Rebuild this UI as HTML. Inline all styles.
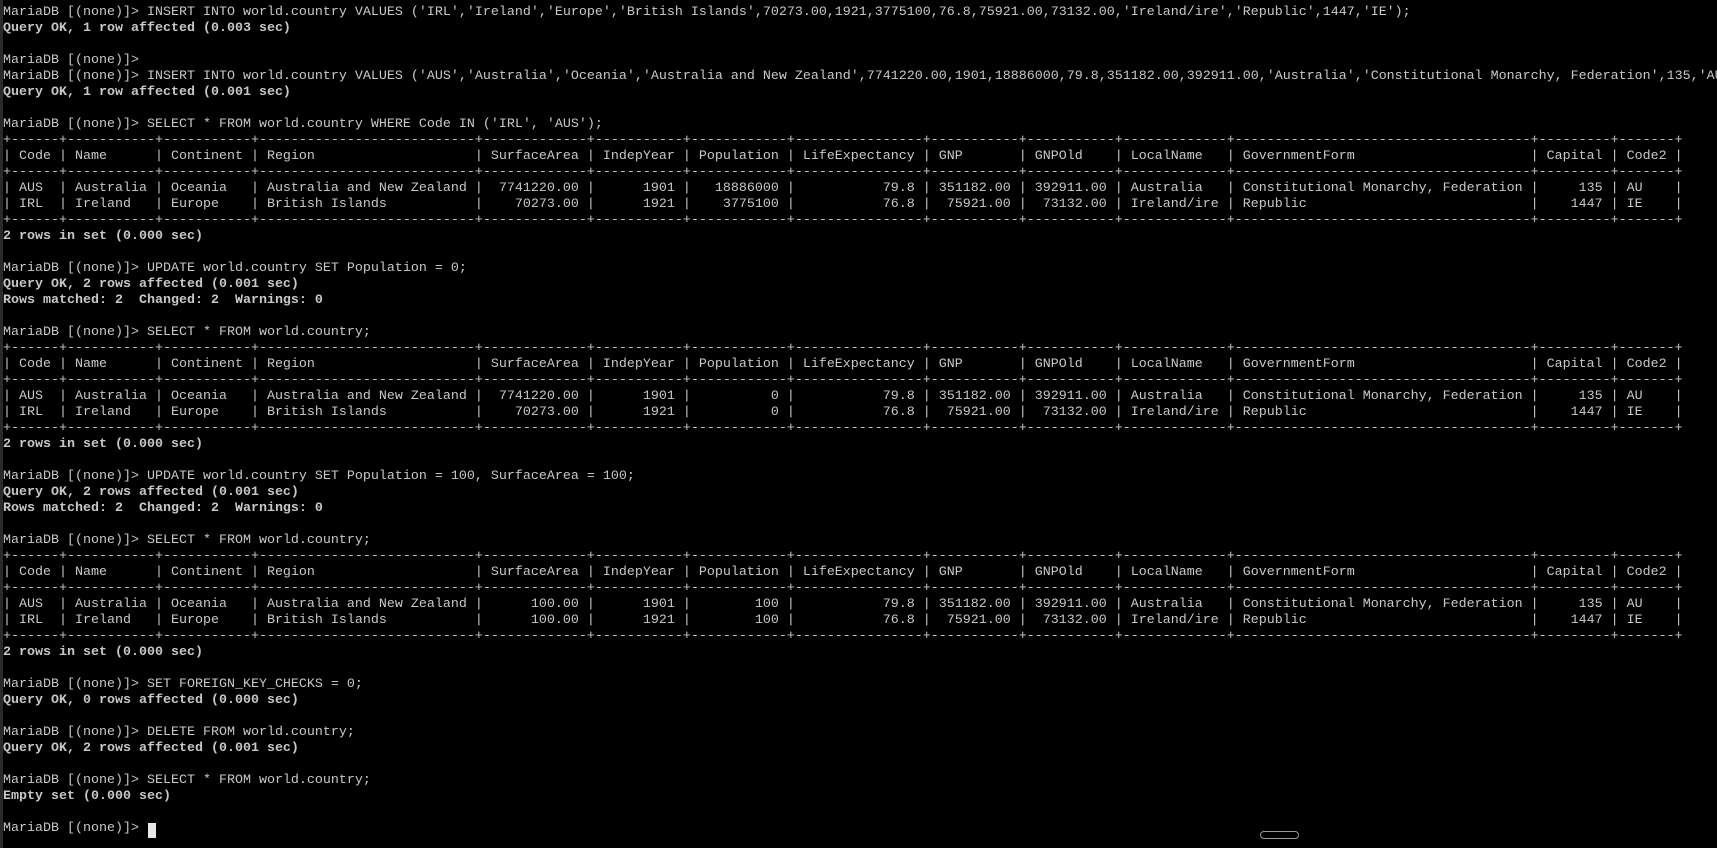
<!DOCTYPE html>
<html><head><meta charset="utf-8"><style>
html,body{margin:0;padding:0;background:#000;width:1717px;height:848px;overflow:hidden;}
#bar{position:absolute;left:0;top:0;width:3px;height:848px;background:#2a2a2a;}
pre{position:absolute;left:3px;top:5px;margin:0;font-family:"Liberation Mono",monospace;font-size:13.33px;line-height:16px;color:#c8c8c8;white-space:pre;width:1714px;overflow:hidden;}
b{font-weight:bold;}
#cur{position:absolute;left:148px;top:823px;width:8px;height:15px;background:#e8e8e8;}
#pill{position:absolute;left:1260px;top:831px;width:37px;height:6px;border:1px solid #999;border-radius:4px;}
</style></head><body><div id="bar"></div><pre>MariaDB [(none)]&gt; INSERT INTO world.country VALUES ('IRL','Ireland','Europe','British Islands',70273.00,1921,3775100,76.8,75921.00,73132.00,'Ireland/ire','Republic',1447,'IE');
<b>Query OK, 1 row affected (0.003 sec)</b>

MariaDB [(none)]&gt;
MariaDB [(none)]&gt; INSERT INTO world.country VALUES ('AUS','Australia','Oceania','Australia and New Zealand',7741220.00,1901,18886000,79.8,351182.00,392911.00,'Australia','Constitutional Monarchy, Federation',135,'AU');
<b>Query OK, 1 row affected (0.001 sec)</b>

MariaDB [(none)]&gt; SELECT * FROM world.country WHERE Code IN ('IRL', 'AUS');
+------+-----------+-----------+---------------------------+-------------+-----------+------------+----------------+-----------+-----------+-------------+-------------------------------------+---------+-------+
| Code | Name      | Continent | Region                    | SurfaceArea | IndepYear | Population | LifeExpectancy | GNP       | GNPOld    | LocalName   | GovernmentForm                      | Capital | Code2 |
+------+-----------+-----------+---------------------------+-------------+-----------+------------+----------------+-----------+-----------+-------------+-------------------------------------+---------+-------+
| AUS  | Australia | Oceania   | Australia and New Zealand |  7741220.00 |      1901 |   18886000 |           79.8 | 351182.00 | 392911.00 | Australia   | Constitutional Monarchy, Federation |     135 | AU    |
| IRL  | Ireland   | Europe    | British Islands           |    70273.00 |      1921 |    3775100 |           76.8 |  75921.00 |  73132.00 | Ireland/ire | Republic                            |    1447 | IE    |
+------+-----------+-----------+---------------------------+-------------+-----------+------------+----------------+-----------+-----------+-------------+-------------------------------------+---------+-------+
<b>2 rows in set (0.000 sec)</b>

MariaDB [(none)]&gt; UPDATE world.country SET Population = 0;
<b>Query OK, 2 rows affected (0.001 sec)</b>
<b>Rows matched: 2  Changed: 2  Warnings: 0</b>

MariaDB [(none)]&gt; SELECT * FROM world.country;
+------+-----------+-----------+---------------------------+-------------+-----------+------------+----------------+-----------+-----------+-------------+-------------------------------------+---------+-------+
| Code | Name      | Continent | Region                    | SurfaceArea | IndepYear | Population | LifeExpectancy | GNP       | GNPOld    | LocalName   | GovernmentForm                      | Capital | Code2 |
+------+-----------+-----------+---------------------------+-------------+-----------+------------+----------------+-----------+-----------+-------------+-------------------------------------+---------+-------+
| AUS  | Australia | Oceania   | Australia and New Zealand |  7741220.00 |      1901 |          0 |           79.8 | 351182.00 | 392911.00 | Australia   | Constitutional Monarchy, Federation |     135 | AU    |
| IRL  | Ireland   | Europe    | British Islands           |    70273.00 |      1921 |          0 |           76.8 |  75921.00 |  73132.00 | Ireland/ire | Republic                            |    1447 | IE    |
+------+-----------+-----------+---------------------------+-------------+-----------+------------+----------------+-----------+-----------+-------------+-------------------------------------+---------+-------+
<b>2 rows in set (0.000 sec)</b>

MariaDB [(none)]&gt; UPDATE world.country SET Population = 100, SurfaceArea = 100;
<b>Query OK, 2 rows affected (0.001 sec)</b>
<b>Rows matched: 2  Changed: 2  Warnings: 0</b>

MariaDB [(none)]&gt; SELECT * FROM world.country;
+------+-----------+-----------+---------------------------+-------------+-----------+------------+----------------+-----------+-----------+-------------+-------------------------------------+---------+-------+
| Code | Name      | Continent | Region                    | SurfaceArea | IndepYear | Population | LifeExpectancy | GNP       | GNPOld    | LocalName   | GovernmentForm                      | Capital | Code2 |
+------+-----------+-----------+---------------------------+-------------+-----------+------------+----------------+-----------+-----------+-------------+-------------------------------------+---------+-------+
| AUS  | Australia | Oceania   | Australia and New Zealand |      100.00 |      1901 |        100 |           79.8 | 351182.00 | 392911.00 | Australia   | Constitutional Monarchy, Federation |     135 | AU    |
| IRL  | Ireland   | Europe    | British Islands           |      100.00 |      1921 |        100 |           76.8 |  75921.00 |  73132.00 | Ireland/ire | Republic                            |    1447 | IE    |
+------+-----------+-----------+---------------------------+-------------+-----------+------------+----------------+-----------+-----------+-------------+-------------------------------------+---------+-------+
<b>2 rows in set (0.000 sec)</b>

MariaDB [(none)]&gt; SET FOREIGN_KEY_CHECKS = 0;
<b>Query OK, 0 rows affected (0.000 sec)</b>

MariaDB [(none)]&gt; DELETE FROM world.country;
<b>Query OK, 2 rows affected (0.001 sec)</b>

MariaDB [(none)]&gt; SELECT * FROM world.country;
<b>Empty set (0.000 sec)</b>

MariaDB [(none)]&gt; </pre><div id="cur"></div><div id="pill"></div></body></html>
